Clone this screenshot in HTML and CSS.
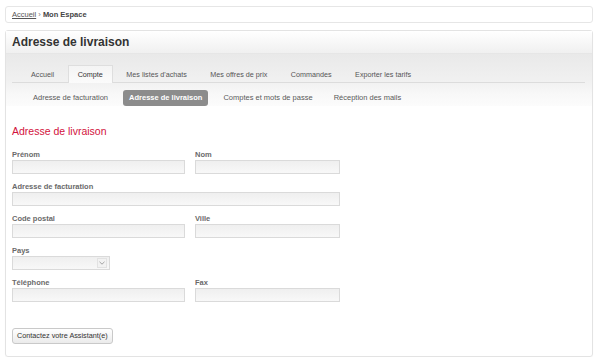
FILE: index.html
```html
<!DOCTYPE html>
<html lang="fr">

<head>
  <meta charset="UTF-8">
  <title>Adresse de livraison</title>
  <link rel="stylesheet" href="styles.css">
</head>

<body>
  <div class="page">
    <div class="breadcrumb">
      <a href="#">Accueil</a> <span class="sep">›</span> <strong>Mon Espace</strong>
    </div>

    <div class="panel">
      <h1 class="panel-title">Adresse de livraison</h1>

      <div class="nav">
        <ul class="tabs">
          <li><a href="#">Accueil</a></li>
          <li class="active"><a href="#">Compte</a></li>
          <li><a href="#">Mes listes d'achats</a></li>
          <li><a href="#">Mes offres de prix</a></li>
          <li><a href="#">Commandes</a></li>
          <li><a href="#">Exporter les tarifs</a></li>
        </ul>
        <ul class="subnav">
          <li><a href="#">Adresse de facturation</a></li>
          <li class="active"><a href="#">Adresse de livraison</a></li>
          <li><a href="#">Comptes et mots de passe</a></li>
          <li><a href="#">Réception des mails</a></li>
        </ul>
      </div>

      <div class="panel-body">
        <h2 class="section-title">Adresse de livraison</h2>

        <form class="form">
          <div class="field">
            <label>Prénom</label>
            <input type="text">
          </div>
          <div class="field">
            <label>Nom</label>
            <input type="text">
          </div>
          <div class="field full">
            <label>Adresse de facturation</label>
            <input type="text">
          </div>
          <div class="field">
            <label>Code postal</label>
            <input type="text">
          </div>
          <div class="field">
            <label>Ville</label>
            <input type="text">
          </div>
          <div class="field full">
            <label>Pays</label>
            <div class="select">
              <select></select>
              <span class="select-arrow">
                <svg xmlns="http://www.w3.org/2000/svg" width="6" height="4" viewBox="0 0 6 4" fill="none">
                  <path d="M0.5 0.8L3 3.2L5.5 0.8" stroke="#9a9a9a" stroke-width="0.9" />
                </svg>
              </span>
            </div>
          </div>
          <div class="field">
            <label>Téléphone</label>
            <input type="text">
          </div>
          <div class="field">
            <label>Fax</label>
            <input type="text">
          </div>
        </form>

        <button class="btn" type="button">Contactez votre Assistant(e)</button>
      </div>
    </div>
  </div>
</body>

</html>
```

FILE: styles.css
```css
* {
  box-sizing: border-box;
}

body {
  margin: 0;
  background: #fff;
  font-family: "Liberation Sans", Arial, sans-serif;
  color: #444;
}

.page {
  padding: 6px 7px 0 5px;
}

.breadcrumb {
  height: 17px;
  padding-left: 6px;
  border: 1px solid #e6e6e6;
  border-radius: 3px;
  font-size: 7.5px;
  line-height: 15px;
  color: #444;
}

.breadcrumb a {
  color: #555;
}

.breadcrumb .sep {
  color: #777;
}

.panel {
  margin-top: 7px;
  border: 1px solid #e3e3e3;
  border-radius: 3px;
  box-shadow: 0 1px 1px rgba(0, 0, 0, 0.04);
}

.panel-title {
  margin: 0;
  height: 23px;
  padding-left: 6px;
  background: linear-gradient(#ffffff, #f0f0f0);
  border-bottom: 1px solid #e6e6e6;
  font-size: 12px;
  font-weight: bold;
  line-height: 22px;
  color: #333;
}

.nav {
  background: linear-gradient(#e9e9e9 0, #f1f1f1 28px, #f8f8f8 40px, #ffffff 62px);
}

.tabs {
  display: flex;
  gap: 3.5px;
  margin: 0 7px 0 6px;
  padding: 11px 0 0 9px;
  list-style: none;
  border-bottom: 1px solid #dcdcdc;
}

.tabs li {
  margin-bottom: -1px;
}

.tabs a {
  display: block;
  height: 18px;
  padding: 0 9px;
  border: 1px solid transparent;
  border-bottom: 0;
  font-size: 7.2px;
  line-height: 17px;
  color: #555;
  text-decoration: none;
}

.tabs .active a {
  background: linear-gradient(#f4f4f4, #fbfbfb);
  border-color: #dedede;
  color: #333;
}

.subnav {
  display: flex;
  gap: 9px;
  margin: 0;
  padding: 7px 0 0 21px;
  list-style: none;
}

.subnav a {
  display: block;
  height: 16px;
  padding: 0 6px;
  border-radius: 3px;
  font-size: 7.5px;
  line-height: 16px;
  color: #5a5a5a;
  text-decoration: none;
}

.subnav .active a {
  background: #8c8c8c;
  color: #fff;
  font-weight: bold;
}

.panel-body {
  padding: 18px 6px 12px;
}

.section-title {
  margin: 0;
  font-size: 10.5px;
  font-weight: normal;
  line-height: 14px;
  color: #d2123c;
}

.form {
  display: grid;
  grid-template-columns: 173px 145px;
  column-gap: 10px;
  row-gap: 8px;
  margin-top: 12px;
}

.field {
  display: flex;
  flex-direction: column;
}

.field.full {
  grid-column: 1 / 3;
}

.field label {
  height: 10px;
  font-size: 7.5px;
  font-weight: bold;
  line-height: 9px;
  color: #6a6a6a;
}

.field input {
  height: 14px;
  margin: 0;
  padding: 0 3px;
  border: 1px solid #dadada;
  background: linear-gradient(#efefef, #f8f8f8);
  font-family: inherit;
  font-size: 7.5px;
}

.select {
  display: flex;
  align-items: center;
  width: 98px;
  height: 14px;
  padding-right: 2px;
  border: 1px solid #dadada;
  background: linear-gradient(#efefef, #f8f8f8);
}

.select select {
  flex: 1;
  height: 100%;
  border: 0;
  background: transparent;
  appearance: none;
}

.select-arrow {
  display: flex;
  align-items: center;
  justify-content: center;
  width: 10px;
  height: 10px;
  border: 1px solid #e2e2e2;
  background: #f2f2f2;
}

.btn {
  display: block;
  height: 16px;
  margin-top: 26px;
  padding: 0 4px;
  border: 1px solid #c9c9c9;
  border-radius: 3px;
  background: linear-gradient(#ffffff, #ebebeb);
  font-family: inherit;
  font-size: 7.25px;
  line-height: 14px;
  color: #333;
}
```
